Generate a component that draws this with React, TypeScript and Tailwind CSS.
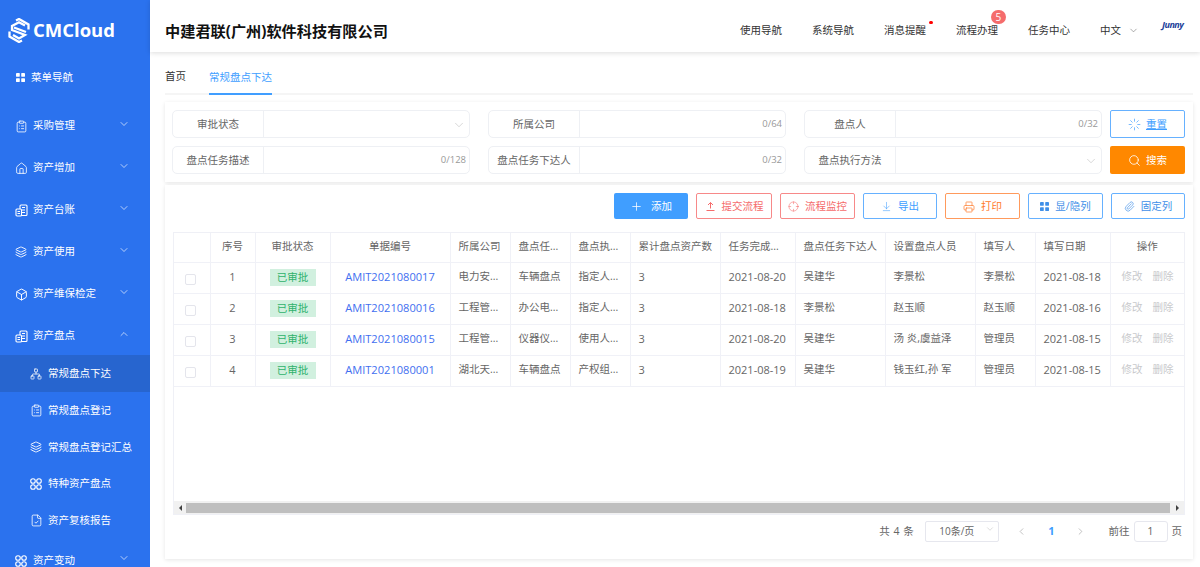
import {
  ArrowDownToLine,
  Box,
  ChevronDown,
  ChevronLeft,
  ChevronRight,
  ChevronUp,
  ClipboardList,
  Crosshair,
  FileCheck,
  House,
  Layers,
  Loader,
  Network,
  Paperclip,
  Plus,
  Printer,
  Search,
} from 'lucide-react';

function FourSquares({ size = 10 }: { size?: number }) {
  return (
    <svg width={size} height={size} viewBox="0 0 10 10" fill="currentColor">
      <rect x="0" y="0" width="4.2" height="4.2" rx="0.5" />
      <rect x="5.8" y="0" width="4.2" height="4.2" rx="0.5" />
      <rect x="0" y="5.8" width="4.2" height="4.2" rx="0.5" />
      <rect x="5.8" y="5.8" width="4.2" height="4.2" rx="0.5" />
    </svg>
  );
}

function FourRings({ size = 12 }: { size?: number }) {
  return (
    <svg width={size} height={size} viewBox="0 0 12 12" fill="none" stroke="currentColor" strokeWidth="1.1">
      <circle cx="3" cy="3" r="2.3" />
      <circle cx="9" cy="3" r="2.3" />
      <circle cx="3" cy="9" r="2.3" />
      <circle cx="9" cy="9" r="2.3" />
    </svg>
  );
}

function LedgerIcon({ size = 13 }: { size?: number }) {
  return (
    <svg width={size} height={size} viewBox="0 0 13 13" fill="none" stroke="currentColor" strokeWidth="1.1">
      <rect x="5" y="1" width="7" height="10.5" rx="1" />
      <rect x="1" y="5" width="5.5" height="7" rx="1" fill="#2b72ee" />
      <path d="M7 3.5h3M7 6h3M7 8.500h3M2.500 7.500h2.500M2.500 9.500h2.500" />
    </svg>
  );
}

function UploadLine() {
  return (
    <svg width="11" height="11" viewBox="0 0 11 11" fill="none" stroke="currentColor" strokeWidth="1">
      <path d="M3 4l2.500-2.500L8 4M5.500 1.500V7.500M1.500 9.500h8" />
    </svg>
  );
}

function Logo() {
  return (
    <svg width="22" height="25" viewBox="0 0 22 25" fill="none" stroke="white" strokeWidth="2.300">
      <path d="M8 2.500L11 1l9.500 5.500v5M14 22.500L11 24l-9.500-5.500v-5" />
      <path d="M17 7.500L11 4.200 4 8v4l13 5-6 3.500-6-3.500" />
      <path d="M6 9.500l12 4.500" />
    </svg>
  );
}

const mainMenu = [
  { label: '采购管理', icon: <ClipboardList size={13} strokeWidth={1.5} /> },
  { label: '资产增加', icon: <House size={13} strokeWidth={1.5} /> },
  { label: '资产台账', icon: <LedgerIcon /> },
  { label: '资产使用', icon: <Layers size={12} strokeWidth={1.8} /> },
  { label: '资产维保检定', icon: <Box size={13} strokeWidth={1.8} /> },
];

const subMenu = [
  { label: '常规盘点下达', icon: <Network size={12} strokeWidth={1.5} />, active: true },
  { label: '常规盘点登记', icon: <ClipboardList size={13} strokeWidth={1.5} /> },
  { label: '常规盘点登记汇总', icon: <Layers size={12} strokeWidth={1.8} /> },
  { label: '特种资产盘点', icon: <FourRings /> },
  { label: '资产复核报告', icon: <FileCheck size={13} strokeWidth={1.5} /> },
];

function MenuRow({ label, icon, open }: { label: string; icon: React.ReactNode; open?: boolean }) {
  return (
    <div className="flex h-[42px] shrink-0 items-center pl-[15px] pr-[20px] pt-[4px] text-[10.5px] text-white">
      <span className="flex w-[18px] justify-start">{icon}</span>
      <span className="flex-1">{label}</span>
      <span className="-mt-[5px]">
        {open ? <ChevronUp size={12} strokeWidth={1.3} /> : <ChevronDown size={12} strokeWidth={1.3} />}
      </span>
    </div>
  );
}

function Sidebar() {
  return (
    <aside className="flex h-[567px] w-[150px] shrink-0 flex-col overflow-hidden bg-[#2b72ee]">
      <div className="flex h-[52px] shrink-0 items-center gap-[3px] pl-[8px] pt-[8px]">
        <Logo />
        <span className="text-[18.500px] font-bold leading-none text-white">CMCloud</span>
      </div>
      <div className="flex h-[51px] shrink-0 items-center pl-[16px] text-[10.5px] text-white">
        <span className="w-[15px]">
          <FourSquares size={9} />
        </span>
        菜单导航
      </div>
      {mainMenu.map((m) => (
        <MenuRow key={m.label} label={m.label} icon={m.icon} />
      ))}
      <MenuRow label="资产盘点" icon={<LedgerIcon />} open />
      {subMenu.map((m) => (
        <div
          key={m.label}
          className={`flex h-[36.6px] shrink-0 items-center pl-[30px] pt-[2px] text-[10.5px] text-white ${m.active ? 'bg-[#2765cf]' : ''}`}
        >
          <span className="w-[18px]">{m.icon}</span>
          {m.label}
        </div>
      ))}
      <MenuRow label="资产变动" icon={<FourRings />} />
    </aside>
  );
}

const navItems = ['使用导航', '系统导航', '消息提醒', '流程办理', '任务中心'];

function Header() {
  return (
    <header className="relative z-10 flex h-[52px] shrink-0 items-center bg-white pl-[15px] pr-[15px] shadow-[0_1px_5px_rgba(0,0,0,0.14)]">
      <h1 className="mt-[10px] flex-1 text-[15.200px] font-bold text-[#111]">中建君联(广州)软件科技有限公司</h1>
      {navItems.map((n) => (
        <div key={n} className="relative mt-[9px] w-[72px] text-[10.5px] text-[#333]">
          {n}
          {n === '消息提醒' && <span className="absolute left-[45px] top-[-2px] h-[3.500px] w-[3.500px] rounded-full bg-[#f00]" />}
          {n === '流程办理' && (
            <span className="absolute left-[35px] top-[-13px] flex h-[14.500px] w-[14.500px] items-center justify-center rounded-full bg-[#f56c6c] text-[10px] leading-none text-white">
              5
            </span>
          )}
        </div>
      ))}
      <div className="mt-[9px] flex w-[62px] items-center text-[10.5px] text-[#333]">
        中文
        <ChevronDown size={11} strokeWidth={1.2} className="ml-[7px] text-[#666]" />
      </div>
      <span className="-mt-[3px] w-[23px] text-[9px] font-bold italic leading-none tracking-[-0.5px] text-[#22409a]">Junny</span>
    </header>
  );
}

function Field({ label, hint, select }: { label: string; hint?: string; select?: boolean }) {
  return (
    <div className="flex h-[28px] w-[298px] items-center rounded-[5px] border border-[#eef0f4] text-[10.5px]">
      <div className="flex h-full w-[91px] shrink-0 items-center justify-center border-r border-[#eef0f4] pt-[1px] text-[#666]">{label}</div>
      <div className="flex flex-1 items-center justify-end pr-[3px] pt-[1px] text-[9.500px] text-[#999]">
        {hint}
        {select && <ChevronDown size={14} strokeWidth={1} className="text-[#bbb]" />}
      </div>
    </div>
  );
}

function FilterCard() {
  return (
    <section className="flex shrink-0 items-start gap-[8px] bg-white px-[7px] py-[8px] shadow-[0_1px_4px_rgba(0,0,0,0.1)]">
      <div className="grid grid-cols-[298px_298px_298px] gap-x-[18px] gap-y-[8px]">
        <Field label="审批状态" select />
        <Field label="所属公司" hint="0/64" />
        <Field label="盘点人" hint="0/32" />
        <Field label="盘点任务描述" hint="0/128" />
        <Field label="盘点任务下达人" hint="0/32" />
        <Field label="盘点执行方法" select />
      </div>
      <div className="flex flex-col gap-[8px]">
        <button className="flex h-[28px] w-[75px] items-center justify-center gap-[5px] rounded-[2px] border border-[#66b1ff] pt-[1px] text-[10.5px] text-[#409eff] underline">
          <Loader size={13} strokeWidth={1.3} />
          重置
        </button>
        <button className="flex h-[28px] w-[75px] items-center justify-center gap-[5px] rounded-[2px] bg-[#ff8800] pt-[1px] text-[10.5px] text-white">
          <Search size={13} strokeWidth={1.5} />
          搜索
        </button>
      </div>
    </section>
  );
}

const toolbar = [
  { label: '提交流程', icon: <UploadLine />, cls: 'w-[76px] border-[#f78989] text-[#f56c6c]' },
  { label: '流程监控', icon: <Crosshair size={11} strokeWidth={1.2} />, cls: 'w-[75px] border-[#f78989] text-[#f56c6c]' },
  { label: '导出', icon: <ArrowDownToLine size={11} strokeWidth={1.2} />, cls: 'w-[74px] border-[#66b1ff] text-[#409eff]' },
  { label: '打印', icon: <Printer size={12} strokeWidth={1.4} />, cls: 'w-[75px] border-[#ff9a5c] text-[#ff7a2a]' },
  { label: '显/隐列', icon: <FourSquares size={9} />, cls: 'w-[75px] border-[#66b1ff] text-[#3f8fe8]' },
  { label: '固定列', icon: <Paperclip size={11} strokeWidth={1.4} />, cls: 'w-[74px] border-[#66b1ff] text-[#3f8fe8]' },
];

const rows = [
  ['1', 'AMIT2021080017', '电力安...', '车辆盘点', '指定人...', '3', '2021-08-20', '吴建华', '李景松', '李景松', '2021-08-18'],
  ['2', 'AMIT2021080016', '工程管...', '办公电...', '指定人...', '3', '2021-08-18', '李景松', '赵玉顺', '赵玉顺', '2021-08-16'],
  ['3', 'AMIT2021080015', '工程管...', '仪器仪...', '使用人...', '3', '2021-08-20', '吴建华', '汤 炎,虞益泽', '管理员', '2021-08-15'],
  ['4', 'AMIT2021080001', '湖北天...', '车辆盘点', '产权组...', '3', '2021-08-19', '吴建华', '钱玉红,孙 军', '管理员', '2021-08-15'],
];

const colWidths = [36, 45, 75, 120, 60, 60, 60, 90, 75, 90, 90, 60, 75, 74];

const headers = ['', '序号', '审批状态', '单据编号', '所属公司', '盘点任...', '盘点执...', '累计盘点资产数', '任务完成...', '盘点任务下达人', '设置盘点人员', '填写人', '填写日期', '操作'];
const centered = [0, 1, 2, 3, 13];

function DataTable() {
  return (
    <div className="mx-[8px] mt-[13px] flex h-[283px] shrink-0 flex-col border border-[#eff0f6]">
      <div className="flex-1 overflow-hidden">
        <table className="w-[1010px] table-fixed border-collapse text-[10.5px] text-[#666]">
          <colgroup>
            {colWidths.map((w, i) => (
              <col key={i} style={{ width: w }} />
            ))}
          </colgroup>
          <thead>
            <tr className="h-[29px]">
              {headers.map((h, i) => (
                <th
                  key={i}
                  className={`border-b border-r border-[#f0f1f7] font-normal last:border-r-0 ${centered.includes(i) ? 'text-center' : 'pl-[8px] text-left'}`}
                >
                  {h}
                </th>
              ))}
            </tr>
          </thead>
          <tbody>
            {rows.map((r) => (
              <tr key={r[0]} className="h-[31px]">
                <td className="border-b border-r border-[#f0f1f7]">
                  <div className="ml-[11px] mt-[3px] h-[11px] w-[11px] rounded-[2px] border border-[#e4e5ec] bg-white" />
                </td>
                <td className="border-b border-r border-[#f0f1f7] pb-[1px] text-center text-[11px]">{r[0]}</td>
                <td className="border-b border-r border-[#f0f1f7] pb-[1px] text-center">
                  <span className="inline-block h-[17px] w-[46px] bg-[#d1f0df] text-[10.5px] leading-[17px] text-[#2fb26c]">已审批</span>
                </td>
                <td className="border-b border-r border-[#f0f1f7] pb-[1px] text-center text-[11.100px] text-[#3f6ff0]">{r[1]}</td>
                {r.slice(2, 5).map((c, i) => (
                  <td key={i} className="border-b border-r border-[#f0f1f7] pb-[1px] pl-[8px]">
                    {c}
                  </td>
                ))}
                <td className="border-b border-r border-[#f0f1f7] pb-[1px] pl-[8px] text-[11px]">{r[5]}</td>
                <td className="border-b border-r border-[#f0f1f7] pb-[1px] pl-[8px] text-[11px]">{r[6]}</td>
                {r.slice(7, 10).map((c, i) => (
                  <td key={i} className="border-b border-r border-[#f0f1f7] pb-[1px] pl-[8px]">
                    {c}
                  </td>
                ))}
                <td className="border-b border-r border-[#f0f1f7] pb-[1px] pl-[8px] text-[11px]">{r[10]}</td>
                <td className="border-b border-[#f0f1f7] pb-[1px] pl-[11px] text-[#c8c9cc]">
                  <span className="mr-[10px]">修改</span>
                  <span>删除</span>
                </td>
              </tr>
            ))}
          </tbody>
        </table>
      </div>
      <div className="flex h-[13px] shrink-0 items-center bg-[#f1f1f1]">
        <span className="flex w-[12px] justify-center">
          <span className="h-0 w-0 border-y-[3.500px] border-r-[3.500px] border-y-transparent border-r-[#404040]" />
        </span>
        <span className="h-[10px] flex-1 bg-[#bfbfbf]" />
        <span className="flex w-[14px] justify-center">
          <span className="h-0 w-0 border-y-[3.500px] border-l-[3.500px] border-y-transparent border-l-[#404040]" />
        </span>
      </div>
    </div>
  );
}

function Pagination() {
  return (
    <div className="mr-[11px] mt-[6px] flex h-[21px] items-center justify-end text-[10.5px] text-[#666]">
      <span className="mr-[11px] tracking-[0.5px]">共 4 条</span>
      <div className="mr-[17px] flex h-[21px] w-[74px] items-center justify-between rounded-[2px] border border-[#e6e7ee] pl-[13px] pr-[3px] text-[10px]">
        10条/页
        <ChevronDown size={10} strokeWidth={1} className="-mt-[5px] text-[#aaa]" />
      </div>
      <ChevronLeft size={11} strokeWidth={1.3} className="text-[#999]" />
      <span className="ml-[21px] mr-[20px] text-[11px] font-bold text-[#409eff]">1</span>
      <ChevronRight size={11} strokeWidth={1.3} className="text-[#999]" />
      <span className="ml-[23px] mr-[4px]">前往</span>
      <div className="mr-[4px] flex h-[21px] w-[34px] items-center justify-center rounded-[3px] border border-[#e6e7ee] text-[11px]">1</div>
      <span>页</span>
    </div>
  );
}

function TableCard() {
  return (
    <section className="mt-[3px] flex h-[374px] shrink-0 flex-col bg-white pt-[8px] shadow-[0_1px_4px_rgba(0,0,0,0.1)]">
      <div className="flex h-[26px] shrink-0 justify-end gap-[8px] pr-[8px]">
        <button className="flex w-[74px] items-center justify-center gap-[8px] rounded-[2px] bg-[#409eff] pt-[1px] text-[10.5px] text-white">
          <Plus size={13} strokeWidth={1.4} />
          添加
        </button>
        {toolbar.map((b) => (
          <button
            key={b.label}
            className={`flex items-center justify-center gap-[6px] rounded-[2px] border pt-[1px] text-[10.5px] ${b.cls}`}
          >
            {b.icon}
            {b.label}
          </button>
        ))}
      </div>
      <DataTable />
      <Pagination />
    </section>
  );
}

export default function App() {
  return (
    <div className="flex h-[567px] w-[1200px] overflow-hidden bg-white font-['Open_Sans','Noto_Sans_CJK_SC',sans-serif]">
      <Sidebar />
      <main className="flex flex-1 flex-col">
        <Header />
        <div className="flex flex-1 flex-col pl-[15px] pr-[7px]">
          <div className="flex h-[43px] shrink-0 items-end border-b-2 border-[#f5f5f5] text-[10.5px]">
            <span className="mr-[23px] pb-[8px] text-[#333]">首页</span>
            <span className="-mb-[2px] border-b-2 border-[#409eff] pb-[7px] text-[#409eff]">常规盘点下达</span>
          </div>
          <div className="mt-[7px]">
            <FilterCard />
            <TableCard />
          </div>
        </div>
      </main>
    </div>
  );
}
